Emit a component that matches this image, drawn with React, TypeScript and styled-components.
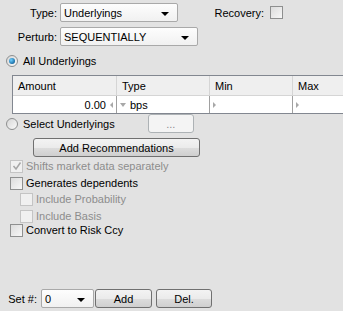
import styled, { createGlobalStyle } from "styled-components";

const Global = createGlobalStyle`
  html, body {
    margin: 0;
    padding: 0;
    background: #e2e2e2;
  }
  body {
    font-family: "Liberation Sans", Arial, sans-serif;
    font-size: 11px;
    color: #000;
  }
`;

const Panel = styled("div")`
  width: 343px;
  height: 311px;
  overflow: hidden;
  background: #e2e2e2;
  display: flex;
  flex-direction: column;
  box-sizing: border-box;
  padding-top: 3px;
`;

const FormRow = styled("div")<{ $mt?: number }>`
  display: flex;
  align-items: center;
  height: 19px;
  margin-top: ${(p) => p.$mt ?? 0}px;
`;

const Label = styled("span")<{ $w?: number }>`
  width: ${(p) => p.$w ?? 57}px;
  text-align: right;
  padding-right: 3px;
  flex-shrink: 0;
`;

const Combo = styled("div")<{ $w: number }>`
  width: ${(p) => p.$w}px;
  height: 19px;
  box-sizing: border-box;
  border: 1px solid #a9a9a9;
  border-radius: 2px;
  background: linear-gradient(#fdfdfd, #f1f1f1);
  display: flex;
  align-items: center;
  justify-content: space-between;
  padding: 0 8px 0 3px;
`;

const Arrow = styled("span")`
  width: 0;
  height: 0;
  border-left: 4px solid transparent;
  border-right: 4px solid transparent;
  border-top: 4px solid #000;
  margin-top: 2px;
`;

const Box = styled("span")<{ $disabled?: boolean }>`
  width: 13px;
  height: 13px;
  box-sizing: border-box;
  border: 1px solid ${(p) => (p.$disabled ? "#c4c4c4" : "#8e8f8f")};
  background: ${(p) =>
    p.$disabled ? "#f0f0f0" : "linear-gradient(135deg, #dcdcdc, #f7f7f7)"};
  flex-shrink: 0;
  display: flex;
  align-items: center;
  justify-content: center;
`;

const CheckRow = styled("div")<{ $indent?: number; $mt: number; $disabled?: boolean }>`
  display: flex;
  align-items: center;
  gap: 3px;
  height: 14px;
  padding-left: ${(p) => p.$indent ?? 10}px;
  margin-top: ${(p) => p.$mt}px;
  color: ${(p) => (p.$disabled ? "#8d8d8d" : "#000")};
`;

const RadioRow = styled("div")<{ $mt: number }>`
  display: flex;
  align-items: center;
  gap: 5px;
  height: 19px;
  padding-left: 6px;
  margin-top: ${(p) => p.$mt}px;
`;

const Radio = styled("span")<{ $on?: boolean }>`
  width: 12px;
  height: 12px;
  border-radius: 50%;
  box-sizing: border-box;
  border: 1px solid #8e8f8f;
  background: linear-gradient(135deg, #d6d6d6, #fafafa);
  display: flex;
  align-items: center;
  justify-content: center;
  flex-shrink: 0;
  &::after {
    content: "";
    display: ${(p) => (p.$on ? "block" : "none")};
    width: 6px;
    height: 6px;
    border-radius: 50%;
    background: radial-gradient(circle at 35% 35%, #6fd0ff, #1b6fa8 70%, #0d3c63);
  }
`;

const Table = styled("div")`
  margin-left: 12px;
  margin-top: 5px;
  width: 370px;
  border: 1px solid #828790;
  background: #fff;
  display: grid;
  grid-template-columns: 104px 93px 83px 90px;
`;

const HeadCell = styled("div")`
  height: 20px;
  background: #efefef;
  border-right: 1px solid #d5d5d5;
  border-bottom: 1px solid #d5d5d5;
  display: flex;
  align-items: center;
  padding-left: 5px;
  box-sizing: border-box;
`;

const Cell = styled("div")<{ $right?: boolean }>`
  height: 17px;
  border-right: 1px solid #a0a0a0;
  display: flex;
  align-items: center;
  justify-content: ${(p) => (p.$right ? "flex-end" : "flex-start")};
  padding: 0 3px;
  gap: 4px;
  box-sizing: border-box;
`;

const Tri = styled("span")<{ $dir: "left" | "right" | "down" }>`
  width: 0;
  height: 0;
  ${(p) =>
    p.$dir === "left"
      ? "border-top: 3px solid transparent; border-bottom: 3px solid transparent; border-right: 3px solid #a8a8a8;"
      : p.$dir === "right"
      ? "border-top: 3px solid transparent; border-bottom: 3px solid transparent; border-left: 3px solid #a8a8a8;"
      : "border-left: 3px solid transparent; border-right: 3px solid transparent; border-top: 4px solid #a8a8a8;"}
`;

const Button = styled("button")<{ $w: number }>`
  width: ${(p) => p.$w}px;
  height: 19px;
  box-sizing: border-box;
  border: 1px solid #707070;
  border-radius: 3px;
  background: linear-gradient(#f3f3f3 0%, #ebebeb 50%, #dddddd 51%, #cfcfcf 100%);
  font-family: "Liberation Sans", Arial, sans-serif;
  font-size: 11px;
  color: #000;
  padding: 0;
  flex-shrink: 0;
`;

const GhostButton = styled(Button)`
  border-color: #adb2b5;
  background: #f4f4f4;
  color: #8d8d8d;
`;

const Spacer = styled("div")`
  flex: 1;
`;

const BottomBar = styled("div")`
  display: flex;
  align-items: center;
  gap: 1px;
  height: 19px;
  margin-bottom: 3px;
  padding-left: 5px;
`;

function Check() {
  return (
    <svg width="10" height="10" viewBox="0 0 10 10">
      <path d="M1.5 5 L4 8 L8.5 1.5" stroke="#a6a6a6" strokeWidth="1.5" fill="none" />
    </svg>
  );
}

export default function App() {
  return (
    <>
      <Global />
      <Panel>
        <FormRow>
          <Label>Type:</Label>
          <Combo $w={118}>
            Underlyings
            <Arrow />
          </Combo>
          <Label $w={86}>Recovery:</Label>
          <Box style={{ marginLeft: 3 }} />
        </FormRow>
        <FormRow $mt={5}>
          <Label>Perturb:</Label>
          <Combo $w={138}>
            SEQUENTIALLY
            <Arrow />
          </Combo>
        </FormRow>

        <RadioRow $mt={5}>
          <Radio $on />
          All Underlyings
        </RadioRow>
        <Table>
          <HeadCell>Amount</HeadCell>
          <HeadCell>Type</HeadCell>
          <HeadCell>Min</HeadCell>
          <HeadCell>Max</HeadCell>
          <Cell $right>
            0.00
            <Tri $dir="left" />
          </Cell>
          <Cell>
            <Tri $dir="down" />
            bps
          </Cell>
          <Cell>
            <Tri $dir="right" />
          </Cell>
          <Cell>
            <Tri $dir="right" />
          </Cell>
        </Table>

        <RadioRow $mt={0}>
          <Radio />
          Select Underlyings
          <GhostButton $w={46} style={{ marginLeft: 28 }}>
            ...
          </GhostButton>
        </RadioRow>
        <FormRow $mt={5} style={{ paddingLeft: 33 }}>
          <Button $w={167}>Add Recommendations</Button>
        </FormRow>

        <CheckRow $mt={2} $disabled>
          <Box $disabled>
            <Check />
          </Box>
          Shifts market data separately
        </CheckRow>
        <CheckRow $mt={3}>
          <Box />
          Generates dependents
        </CheckRow>
        <CheckRow $mt={2} $indent={20} $disabled>
          <Box $disabled />
          Include Probability
        </CheckRow>
        <CheckRow $mt={3} $indent={20} $disabled>
          <Box $disabled />
          Include Basis
        </CheckRow>
        <CheckRow $mt={0}>
          <Box />
          Convert to Risk Ccy
        </CheckRow>

        <Spacer />
        <BottomBar>
          <Label $w={32}>Set #:</Label>
          <Combo $w={53}>
            0
            <Arrow />
          </Combo>
          <Button $w={57}>Add</Button>
          <Button $w={56} style={{ marginLeft: 3 }}>
            Del.
          </Button>
        </BottomBar>
      </Panel>
    </>
  );
}
